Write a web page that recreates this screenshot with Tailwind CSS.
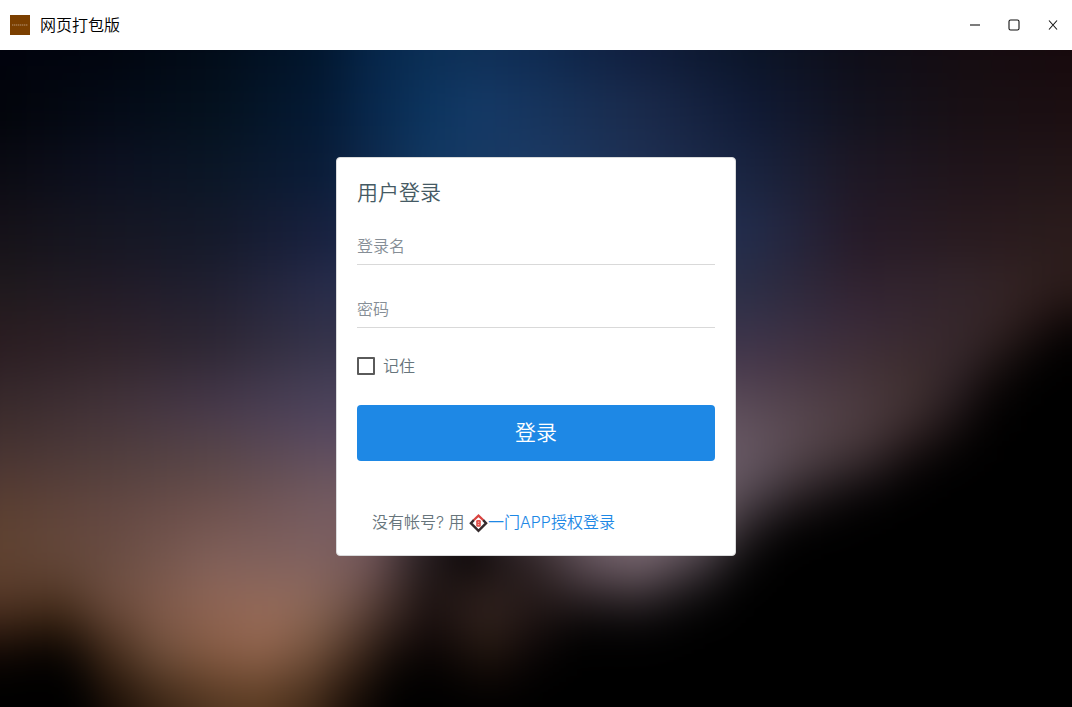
<!DOCTYPE html>
<html lang="zh-CN">

<head>
    <meta charset="UTF-8">
    <meta name="viewport" content="width=device-width, initial-scale=1.0">
    <title>网页打包版</title>
    <script src="https://cdn.jsdelivr.net/npm/@tailwindcss/browser@4"></script>
</head>

<body class="h-screen flex flex-col overflow-hidden bg-black font-['Inter','Noto_Sans_CJK_SC',sans-serif] text-base font-[350]">

    <!-- Title bar -->
    <header class="h-[50px] shrink-0 flex items-center justify-between bg-white text-black pl-[10px] pr-[13px]">
        <div class="flex items-center gap-[10px]">
            <svg class="w-5 h-5" viewBox="0 0 20 20">
                <rect width="20" height="20" fill="#7b3f00" />
                <path d="M2 10h16" stroke="#b08a66" stroke-width="1.6" stroke-dasharray="1.4 .6" opacity=".75" />
            </svg>
            <h1 class="leading-6">网页打包版</h1>
        </div>
        <div class="flex items-center gap-[27px]">
            <button type="button" aria-label="最小化">
                <svg class="w-3 h-3" viewBox="0 0 12 12" fill="none" stroke="#111">
                    <path d="M1 6h10" stroke-width="1.1" />
                </svg>
            </button>
            <button type="button" aria-label="最大化">
                <svg class="w-3 h-3" viewBox="0 0 12 12" fill="none" stroke="#111">
                    <rect x="1" y="1" width="10" height="10" rx="1.6" stroke-width="1.1" />
                </svg>
            </button>
            <button type="button" aria-label="关闭">
                <svg class="w-3 h-3" viewBox="0 0 12 12" fill="none" stroke="#111">
                    <path d="M2 1.5l8 9M10 1.5l-8 9" stroke-width="1.1" />
                </svg>
            </button>
        </div>
    </header>

    <main class="relative flex-1 flex justify-center items-start pt-[107px]">
        <!-- Blurred night backdrop, rows are filled in by the script below -->
        <svg id="backdrop" class="absolute inset-0 w-full h-full" viewBox="0 0 1072 657" preserveAspectRatio="none" aria-hidden="true">
            <defs>
                <filter id="soft" filterUnits="userSpaceOnUse" x="-100" y="-100" width="1272" height="857" color-interpolation-filters="sRGB">
                    <feGaussianBlur stdDeviation="14 22" />
                </filter>
            </defs>
            <g id="rows" filter="url(#soft)"></g>
        </svg>

        <!-- Login card -->
        <section class="relative w-[400px] bg-white border border-[#d9dadb] rounded p-5 text-[#67757c]">
            <form id="loginForm" novalidate>
                <h2 class="text-[21px] leading-[30px] text-[#455a64]">用户登录</h2>

                <div class="relative mt-[19px]">
                    <input type="text" id="username" name="username" placeholder=" "
                        class="peer block w-full h-[38px] border-b border-[#d9d9d9] focus:outline-none focus:border-[#1e88e5]">
                    <label for="username"
                        class="absolute left-0 top-[7px] leading-6 text-[#868e96] cursor-text transition-all peer-focus:-top-3 peer-focus:text-xs peer-[:not(:placeholder-shown)]:-top-3 peer-[:not(:placeholder-shown)]:text-xs">登录名</label>
                </div>

                <div class="relative mt-[25px]">
                    <input type="password" id="password" name="password" placeholder=" "
                        class="peer block w-full h-[38px] border-b border-[#d9d9d9] focus:outline-none focus:border-[#1e88e5]">
                    <label for="password"
                        class="absolute left-0 top-[7px] leading-6 text-[#868e96] cursor-text transition-all peer-focus:-top-3 peer-focus:text-xs peer-[:not(:placeholder-shown)]:-top-3 peer-[:not(:placeholder-shown)]:text-xs">密码</label>
                </div>

                <div class="flex items-center gap-2 mt-[26px]">
                    <input type="checkbox" id="remember" name="remember"
                        class="appearance-none w-[18px] h-[18px] border-2 border-[#5a5a5a] rounded-[1px] checked:bg-[#1e88e5] checked:border-[#1e88e5]">
                    <label for="remember" class="leading-6">记住</label>
                </div>

                <button type="submit"
                    class="block w-full h-14 mt-[27px] rounded bg-[#1e88e5] text-white text-[21px] cursor-pointer hover:bg-[#1976d2]">登录</button>
            </form>

            <p class="mt-[49px] mb-px px-[15px] leading-6">没有帐号? 用
                <a href="#" class="text-[#1e88e5]"><svg class="inline-block w-[19px] h-[19px] align-[-5px]" viewBox="0 0 19 19">
                        <path d="M4.6 6.3L9.5 1.6l4.9 4.7" fill="none" stroke="#d9433f" stroke-width="2.2" />
                        <path d="M4.8 6.1L1.9 9.2l7.6 7.7 7.6-7.7-2.9-3.1" fill="none" stroke="#352b2d" stroke-width="2.4" />
                        <rect x="7.2" y="6" width="4.6" height="6.8" rx="1.2" fill="#e2504b" />
                        <path d="M8.8 8.2h1.4M8.8 10.6h1.4" stroke="#fbdcda" stroke-width=".8" />
                    </svg>一门APP授权登录</a>
            </p>
        </section>
    </main>

    <script>
        // Each row: top, then "x colour" pairs running left to right
        const rows = [
            [-60, '0 #01030d 107 #01050f 214 #020c19 321 #02172f 375 #06264a 429 #0b2f56 480 #0f3058 536 #0f2b52 643 #101e3d 750 #0b1529 858 #0e0d18 965 #150c11 1072 #170a0d'],
            [30, '0 #02040a 107 #040a16 214 #04111e 321 #041a35 375 #08284d 429 #0c345e 480 #143966 536 #16345d 643 #1a2a4b 750 #101a35 858 #12121e 965 #180f14 1072 #1b0e11'],
            [90, '0 #0a0a12 107 #0c1020 214 #0a1626 321 #0a1c38 429 #123862 536 #1c3a64 643 #1e2f52 750 #18233f 858 #1d1724 965 #1f141a 1072 #221517'],
            [150, '0 #151118 107 #151622 214 #14192a 321 #17203e 429 #1a3358 536 #203a60 643 #223356 750 #222b4a 858 #251a28 965 #281a1f 1072 #2a1b1b'],
            [210, '0 #1e191c 107 #201a26 214 #1f1f30 321 #262a48 429 #2a3a5c 536 #2c3a5c 643 #2c3656 750 #2b2d45 858 #30222f 965 #32242a 1020 #322222 1072 #2c1c1b'],
            [255, '0 #281c20 107 #2a2029 214 #292434 321 #303049 536 #343a5a 643 #34364f 750 #363249 858 #38293a 930 #36272e 1000 #342425 1040 #221414 1072 #100807'],
            [285, '0 #2b1c20 107 #2f2229 214 #2e2733 321 #363349 536 #3a3a58 643 #3a3450 750 #413449 858 #3e2e36 930 #3a2a2e 970 #35272a 1010 #1e1413 1050 #050202 1072 #000000'],
            [315, '0 #32252a 107 #3a2c32 214 #3c3142 321 #443e55 536 #403e5c 643 #4e4558 750 #4e3e4e 858 #46353c 910 #40302f 950 #32252a 990 #150d0d 1030 #000000'],
            [345, '0 #3a2a2a 107 #43333a 214 #47394a 321 #4c425a 536 #504860 700 #645460 750 #5a4b57 858 #4d3c40 910 #403134 950 #261b1d 990 #060303 1020 #000000'],
            [375, '0 #433130 107 #4b393b 214 #53424a 321 #5a4a60 536 #605468 700 #685866 750 #64545f 810 #56464c 870 #463639 920 #241819 970 #040202 1000 #000000'],
            [405, '0 #4e3733 107 #54403d 214 #5c4848 321 #66525c 536 #70606a 700 #706068 750 #625560 800 #4a3d43 858 #2e2427 910 #0a0607 940 #000000'],
            [435, '0 #583d31 107 #5f4540 214 #6b4f4d 321 #735a60 536 #70606a 650 #7a6872 710 #706068 750 #4c4149 800 #241c1f 850 #080506 890 #000000'],
            [465, '0 #5e4232 107 #674a42 214 #765751 321 #7a5e60 370 #765a5e 415 #34282c 460 #0c0608 536 #4a3c42 600 #75646c 660 #7e6c76 710 #625660 750 #221c1f 790 #040303 820 #000000'],
            [495, '0 #5f412f 107 #674b40 214 #80605a 321 #806260 370 #705458 415 #30262a 470 #080405 536 #302528 590 #665660 640 #7a6872 690 #544850 740 #121011 770 #000000'],
            [525, '0 #5a3c2c 60 #583c2c 107 #6e4e40 214 #8c6456 300 #8e685c 350 #785a52 390 #4a3632 429 #1e1412 490 #2c1f1c 536 #281d1c 600 #3c3034 640 #42373c 690 #1c181a 740 #000000'],
            [555, '0 #422919 60 #38220f 107 #5e4030 160 #7e5847 214 #8e6350 270 #986b57 321 #80604e 350 #66493e 390 #3a2822 429 #1a1010 490 #32221e 536 #1d1312 590 #0a0707 640 #0a0809 700 #000000'],
            [585, '0 #140803 50 #080301 80 #1c1008 107 #402918 160 #70503c 214 #885d46 260 #90634c 310 #78543f 350 #4c3324 390 #1c110c 429 #0c0504 490 #22170f 530 #100808 570 #000000'],
            [615, '0 #000000 70 #000000 107 #2a190c 160 #563a26 214 #6e4930 260 #755038 310 #5b3e2a 350 #2f1d12 395 #060301 430 #000000 490 #0e0604 540 #000000'],
            [640, '0 #000000 80 #000000 107 #140a04 160 #362212 214 #503520 260 #58391f 310 #402917 350 #180d06 390 #000000']
        ];
        const ns = 'http://www.w3.org/2000/svg';
        const defs = document.querySelector('#backdrop defs');
        const group = document.querySelector('#rows');

        rows.forEach(([top, colours], i) => {
            const gradient = document.createElementNS(ns, 'linearGradient');
            gradient.id = `row${i}`;
            gradient.setAttribute('gradientUnits', 'userSpaceOnUse');
            gradient.setAttribute('x2', 1072);
            const parts = colours.split(' ');
            for (let p = 0; p < parts.length; p += 2) {
                const stop = document.createElementNS(ns, 'stop');
                stop.setAttribute('offset', parts[p] / 1072);
                stop.setAttribute('stop-color', parts[p + 1]);
                gradient.append(stop);
            }
            defs.append(gradient);

            const bottom = rows[i + 1] ? rows[i + 1][0] : 720;
            const rect = document.createElementNS(ns, 'rect');
            rect.setAttribute('x', -80);
            rect.setAttribute('y', top);
            rect.setAttribute('width', 1232);
            rect.setAttribute('height', bottom - top);
            rect.setAttribute('fill', `url(#row${i})`);
            group.append(rect);
        });

        document.querySelector('#loginForm').addEventListener('submit', e => e.preventDefault());
    </script>
</body>

</html>
